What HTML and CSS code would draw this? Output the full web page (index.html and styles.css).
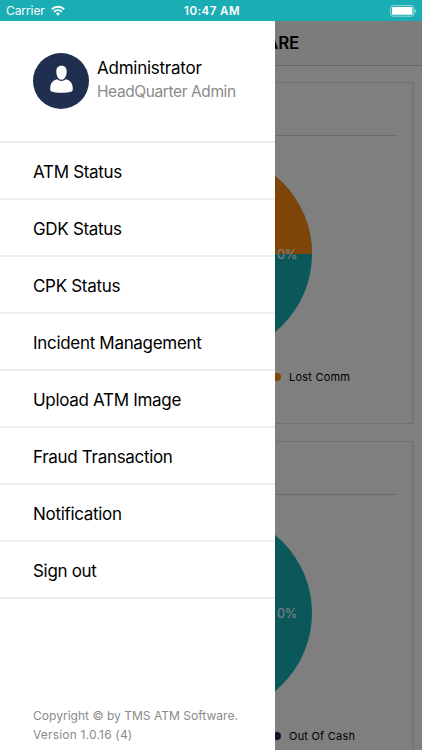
FILE: index.html
```html
<!DOCTYPE html>
<html lang="en">
<head>
<meta charset="utf-8">
<title>TMS ATM Software</title>
<link rel="stylesheet" href="styles.css">
</head>
<body>
<div class="screen">
  <header class="status-bar">
    <div class="carrier"><span>Carrier</span>
      <svg class="wifi" viewBox="0 0 14 11" width="14" height="11"><g fill="none" stroke="#fff" stroke-width="1.9"><path d="M.8 4.2a9 9 0 0 1 12.4 0"/><path d="M3 6.7a5.9 5.9 0 0 1 8 0"/></g><path d="M4.8 8.4a3.3 3.3 0 0 1 4.4 0L7 10.7z" fill="#fff"/></svg>
    </div>
    <div class="clock">10:47 AM</div>
    <svg class="battery" viewBox="0 0 27 12" width="27" height="12"><rect x=".6" y=".6" width="23.2" height="10.6" rx="2.4" fill="none" stroke="#fff" stroke-opacity=".55"/><rect x="2" y="2" width="20.4" height="7.8" rx="1.1" fill="#fff"/><path d="M24.9 4v4q1.4-.7 1.4-2t-1.4-2z" fill="#fff" fill-opacity=".55"/></svg>
  </header>
  <main class="content">
    <h1 class="title"><span>TMS ATM SOFTWARE</span></h1>
    <section class="card">
      <div class="card-head"></div>
      <svg class="pie" viewBox="0 0 202 202" width="202" height="202"><circle cx="101" cy="101" r="101" fill="#17b0b6"/><path d="M101 101V0a101 101 0 0 1 101 101z" fill="#ff8b10"/><text x="177" y="106" text-anchor="middle">0%</text></svg>
      <div class="legend"><i class="dot orange"></i><span>Lost Comm</span></div>
    </section>
    <section class="card">
      <div class="card-head"></div>
      <svg class="pie" viewBox="0 0 202 202" width="202" height="202"><circle cx="101" cy="101" r="101" fill="#17b0b6"/><text x="177" y="106" text-anchor="middle">0%</text></svg>
      <div class="legend"><i class="dot navy"></i><span>Out Of Cash</span></div>
    </section>
  </main>
  <div class="scrim"></div>
  <aside class="drawer">
    <div class="profile">
      <svg class="avatar" viewBox="0 0 56 56" width="56" height="56"><circle cx="28" cy="28" r="28" fill="#202f50"/><path d="M28.500 12.800c3.600 0 5.300 2.200 5.200 6-.2 4.500-2.200 8-5.200 8s-5-3.500-5.200-8c-.1-3.800 1.600-6 5.200-6z" fill="#fff"/><path d="M24.200 26.300c1.300 1.200 2.700 1.700 4.300 1.700s3-.5 4.300-1.700c4.300.9 6.900 3.800 7 9.500 0 1.700-.3 2.300-1.200 2.700-4.100 1.800-16.100 1.800-20.200 0-.9-.4-1.200-1-1.200-2.700.1-5.700 2.700-8.600 7-9.500z" fill="#fff"/></svg>
      <div><div class="name">Administrator</div><div class="role">HeadQuarter Admin</div></div>
    </div>
    <nav class="menu">
      <a>ATM Status</a><a>GDK Status</a><a>CPK Status</a><a>Incident Management</a><a>Upload ATM Image</a><a>Fraud Transaction</a><a>Notification</a><a>Sign out</a>
    </nav>
    <footer class="about"><div>Copyright © by TMS ATM Software.</div><div class="version">Version 1.0.16 (4)</div></footer>
  </aside>
</div>
</body>
</html>
```
FILE: styles.css
```css
* { box-sizing: border-box; }
body { margin: 0; font-family: Inter, "Liberation Sans", sans-serif; color: #000; }
.screen { position: relative; width: 422px; height: 750px; overflow: hidden; background: #fff; }

.status-bar { display: grid; grid-template-columns: 1fr auto 1fr; align-items: center; height: 21px; padding: 0 5px 0 6px; background: #1badb4; color: #fff; }
.carrier { display: flex; align-items: center; gap: 6px; font-size: 12px; letter-spacing: -.08px; }
.clock { font-size: 11.500px; font-weight: 600; letter-spacing: .45px; padding-left: 1px; }
.battery { justify-self: end; }

.title { display: flex; justify-content: center; align-items: center; height: 45px; margin: 0; background: #f8f8f8; border-bottom: 1px solid #d0d0d0; font-size: 17px; font-weight: 600; letter-spacing: -.2px; }
.card { display: flex; flex-direction: column; align-items: center; height: 342px; margin: 16px 8px 17px; padding: 0 15px 0 16px; border: 1px solid #e0e0e0; border-right: 2px solid #e9e9e9; }
.card + .card { margin-top: 0; }
.card-head { align-self: stretch; height: 53px; border-bottom: 1px solid #d8d8d8; }
.pie { flex: none; margin-top: 17px; }
.pie text { font-size: 13px; letter-spacing: -.4px; fill: #fff; }
.legend { display: flex; align-items: center; align-self: stretch; height: 16px; margin-top: 14px; padding-left: 248px; gap: 8px; font-size: 11px; letter-spacing: .22px; white-space: nowrap; }
.dot { flex: none; width: 8px; height: 8px; border-radius: 50%; }
.orange { background: #ff8b10; }
.navy { background: #20265e; }

.scrim { position: absolute; inset: 21px 0 0; background: rgba(0, 0, 0, .5); }
.drawer { position: absolute; top: 21px; bottom: 0; left: 0; width: 275px; display: flex; flex-direction: column; background: #fff; }
.profile { display: flex; align-items: center; gap: 8px; height: 122px; padding-left: 33px; border-bottom: 2px solid #ededed; }
.profile > div { margin-top: -2px; }
.name { font-size: 17px; line-height: 23px; letter-spacing: -.25px; }
.role { font-size: 15.500px; line-height: 23px; color: #8a8a8a; letter-spacing: -.4px; }
.menu a { display: flex; align-items: center; height: 57px; padding: 3px 0 0 33px; border-bottom: 2px solid #ededed; font-size: 17px; letter-spacing: -.31px; }
.about { margin-top: auto; padding: 0 0 6px 33px; font-size: 12px; line-height: 18.500px; color: #8a8a8a; letter-spacing: .03px; }
.version { letter-spacing: .19px; }
```
